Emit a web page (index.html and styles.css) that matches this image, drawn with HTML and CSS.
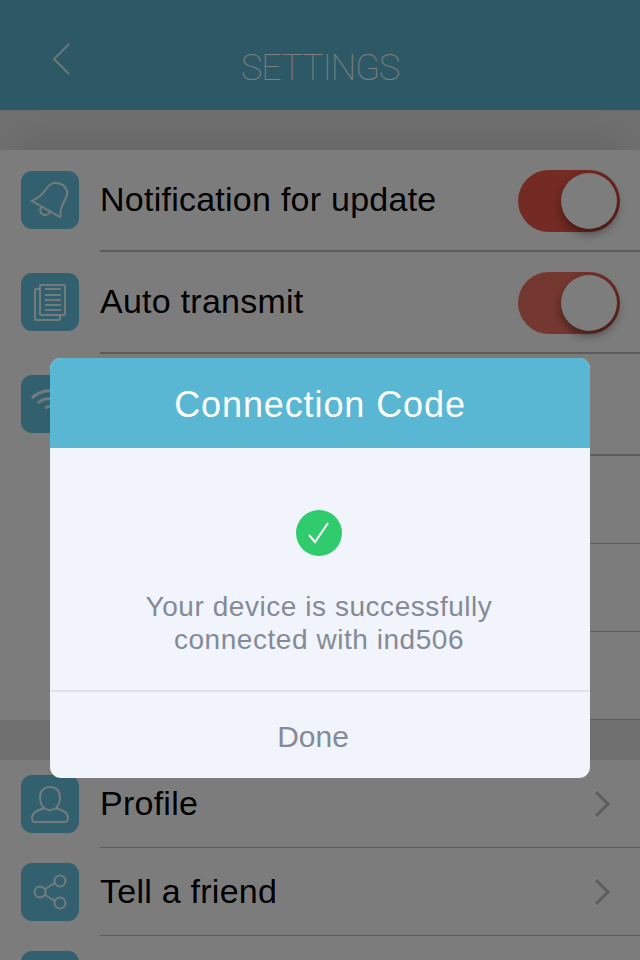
FILE: index.html
```html
<!DOCTYPE html>
<html lang="en">
<head>
    <meta charset="UTF-8">
    <meta name="viewport" content="width=device-width, initial-scale=1.0">
    <title>Settings</title>
    <link rel="stylesheet" href="styles.css">
</head>
<body>
    <header class="topbar">
        <svg class="back" width="20" height="34" viewBox="0 0 20 34"><path d="M18 2 3 17l15 15"/></svg>
        <h1>SETTINGS</h1>
    </header>

    <section class="group first">
        <div class="row tall">
            <span class="tile">
                <svg width="58" height="58" viewBox="0 0 58 58"><path d="M11 30c6-3 11-7 14-12 3-4 6-7 11-6 7 1 11 6 10 12-1 4-5 9-6 14-1 3 0 6-1 8Z"/><path d="M20 36c-2 4 0 8 4 8 3 0 5-2 5-4"/></svg>
            </span>
            <div class="line"><span class="label">Notification for update</span><span class="switch"><span class="knob"></span></span></div>
        </div>
        <div class="row tall">
            <span class="tile">
                <svg width="58" height="58" viewBox="0 0 58 58"><path d="M19 16h-4a1 1 0 0 0-1 1v29a1 1 0 0 0 1 1h23a1 1 0 0 0 1-1v-4"/><rect x="19" y="12" width="25" height="30" rx="1"/><path d="M24 16h16M24 22h16M24 27h16M24 32h16M24 37h16"/></svg>
            </span>
            <div class="line"><span class="label">Auto transmit</span><span class="switch soft"><span class="knob"></span></span></div>
        </div>
        <div class="row tall">
            <span class="tile">
                <svg width="58" height="58" viewBox="0 0 58 58"><path class="wide" d="M11 23A26 26 0 0 1 47 23M17 28A18 18 0 0 1 41 28M24 33A10 10 0 0 1 34 33"/></svg>
            </span>
            <div class="line"></div>
        </div>
        <div class="row"><span class="tile-gap"></span><div class="line"></div></div>
        <div class="row"><span class="tile-gap"></span><div class="line"></div></div>
        <div class="row"><span class="tile-gap"></span><div class="line"></div></div>
    </section>

    <section class="group">
        <div class="row">
            <span class="tile">
                <svg width="58" height="58" viewBox="0 0 58 58"><path d="M23 33c-3-3-4-7-4-11 0-6 4-10 10-10s10 4 10 10c0 4-1 8-4 11-4 3-8 3-12 0Z"/><path d="M23 33c-4 2-12 3-12 10 0 3 1 4 3 4h30c2 0 3-1 3-4 0-7-8-8-12-10"/></svg>
            </span>
            <div class="line"><span class="label">Profile</span><svg class="chevron" width="18" height="28" viewBox="0 0 18 28"><path d="M3 2l12 12L3 26"/></svg></div>
        </div>
        <div class="row">
            <span class="tile">
                <svg width="58" height="58" viewBox="0 0 58 58"><circle cx="19" cy="29" r="5.5"/><circle cx="39" cy="18" r="5.5"/><circle cx="39" cy="40" r="5.5"/><path d="M24 26l10-6M24 32l10 6"/></svg>
            </span>
            <div class="line"><span class="label">Tell a friend</span><svg class="chevron" width="18" height="28" viewBox="0 0 18 28"><path d="M3 2l12 12L3 26"/></svg></div>
        </div>
        <div class="row">
            <span class="tile"></span>
            <div class="line"></div>
        </div>
    </section>

    <div class="overlay">
        <div class="dialog">
            <div class="dialog-head">Connection Code</div>
            <div class="dialog-body">
                <svg class="check" width="46" height="46" viewBox="0 0 46 46"><circle cx="23" cy="23" r="23"/><path d="M13 25l6 7 13-19"/></svg>
                <p>Your device is successfully<br>connected with ind506</p>
            </div>
            <div class="dialog-foot">Done</div>
        </div>
    </div>
</body>
</html>
```

FILE: styles.css
```css
html, body {
    margin: 0;
    padding: 0;
    height: 960px;
    overflow: hidden;
}

body {
    font-family: "Liberation Sans", Arial, sans-serif;
    background-color: #dedede;
    position: relative;
}

.topbar {
    height: 110px;
    background-color: #5ab2cc;
    box-sizing: border-box;
    padding: 42px 0 0 51px;
    display: flex;
    align-items: flex-start;
}

.topbar h1 {
    margin: 6px 0 0 170px;
    font-family: Roboto, sans-serif;
    font-weight: 100;
    font-size: 36px;
    line-height: 40px;
    letter-spacing: -1px;
    color: #fff;
}

.back path {
    fill: none;
    stroke: #fff;
    stroke-width: 2;
    opacity: 0.75;
}

.group {
    margin-top: 40px;
    background-color: #f8f8f8;
}

.group.first {
    box-shadow: 0 -30px 30px -20px #ccc;
}

.row {
    height: 88px;
    padding-left: 21px;
    display: flex;
    align-items: stretch;
    gap: 21px;
}

.row.tall {
    height: 102px;
}

.tile,
.tile-gap {
    flex: none;
    width: 58px;
    height: 58px;
    align-self: center;
}

.row.tall .tile {
    margin-top: -2px;
}

.tile {
    background-color: #66c0de;
    border-radius: 11px;
}

.tile svg {
    display: block;
}

.tile path,
.tile rect,
.tile circle {
    fill: none;
    stroke: #fff;
    stroke-width: 2;
    opacity: 0.85;
}

.tile path.wide {
    stroke-width: 3;
}

.line {
    flex: 1;
    display: flex;
    align-items: center;
    justify-content: space-between;
    padding-right: 20px;
    border-bottom: 1px solid #b8b8b8;
}

.row.tall .line {
    border-bottom-width: 2px;
}

.label {
    font-size: 34px;
    letter-spacing: 0.25px;
    color: #000;
}

.row.tall .label {
    margin-top: -2px;
}

.switch {
    width: 102px;
    height: 62px;
    margin-top: 2px;
    border-radius: 31px;
    background: linear-gradient(90deg, #e65648 50%, #d8493d 100%);
    display: flex;
    align-items: center;
    justify-content: flex-end;
    padding-right: 3px;
    box-sizing: border-box;
}

.switch.soft {
    background: linear-gradient(90deg, #e87060 50%, #d85045 100%);
}

.knob {
    width: 56px;
    height: 56px;
    border-radius: 50%;
    background-color: #fbfbfb;
    box-shadow: 0 5px 10px rgba(0, 0, 0, 0.4);
}

.chevron {
    margin-right: 9px;
}

.chevron path {
    fill: none;
    stroke: #bbb;
    stroke-width: 3;
}

.overlay {
    position: absolute;
    top: 0;
    left: 0;
    right: 0;
    bottom: 0;
    background-color: rgba(0, 0, 0, 0.5);
    padding: 358px 50px 0;
}

.dialog {
    height: 420px;
    background-color: #f1f5fb;
    border-radius: 11px;
    overflow: hidden;
    display: flex;
    flex-direction: column;
    text-align: center;
}

.dialog-head {
    height: 90px;
    line-height: 93px;
    background-color: #5ab7d3;
    color: #fff;
    font-size: 36px;
    letter-spacing: 0.9px;
}

.dialog-body {
    height: 244px;
    box-sizing: border-box;
    padding-top: 62px;
    border-bottom: 2px solid #dfe2e6;
}

.check {
    display: block;
    margin: 0 auto;
    transform: translateX(-1px);
}

.check circle {
    fill: #2fcb6c;
}

.check path {
    fill: none;
    stroke: #fff;
    stroke-width: 2;
}

.dialog-body p {
    margin: 34px 0 0;
    padding-right: 2px;
    font-size: 28px;
    line-height: 33px;
    letter-spacing: 0.55px;
    color: #858a97;
}

.dialog-foot {
    flex: 1;
    padding: 27px 14px 0 0;
    font-size: 30px;
    line-height: 36px;
    color: #858a97;
}
```
